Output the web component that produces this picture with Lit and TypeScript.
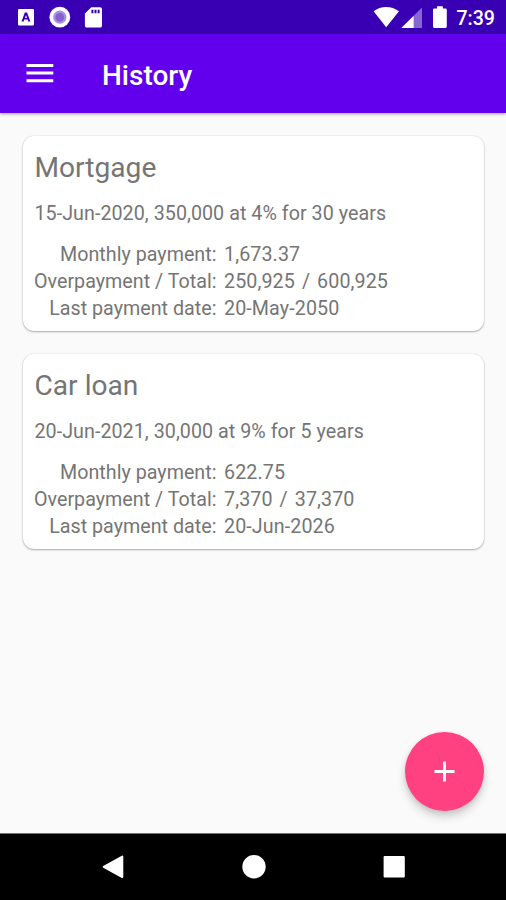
import { LitElement, html, css } from "lit";
import { customElement, property } from "lit/decorators.js";

interface Loan {
  name: string;
  terms: string;
  rows: [string, string][];
}

const LOANS: Loan[] = [
  {
    name: "Mortgage",
    terms: "15-Jun-2020, 350,000 at 4% for 30 years",
    rows: [
      ["Monthly payment:", "1,673.37"],
      ["Overpayment / Total:", "250,925 / 600,925"],
      ["Last payment date:", "20-May-2050"],
    ],
  },
  {
    name: "Car loan",
    terms: "20-Jun-2021, 30,000 at 9% for 5 years",
    rows: [
      ["Monthly payment:", "622.75"],
      ["Overpayment / Total:", "7,370 / 37,370"],
      ["Last payment date:", "20-Jun-2026"],
    ],
  },
];

@customElement("status-bar")
class StatusBar extends LitElement {
  static styles = css`
    :host {
      display: flex;
      align-items: center;
      justify-content: space-between;
      height: 34px;
      padding: 0 11px 0 17px;
      background: #3900b3;
      color: #fff;
    }
    .group {
      display: flex;
      align-items: center;
    }
    svg {
      display: block;
      fill: #fff;
    }
    .time {
      font-size: 19.6px;
      font-weight: 500;
      line-height: 34px;
      padding-top: 2px;
      height: 32px;
      margin-left: 8px;
    }
  `;
  render() {
    return html`
      <div class="group">
        <svg width="87" height="34" viewBox="17 0 87 34">
          <path
            fill-rule="evenodd"
            d="M19.3 9h13.4q1.3 0 1.3 1.3v14q0 1.3-1.3 1.3h-13.4q-1.3 0-1.3-1.3v-14q0-1.3 1.3-1.3zM24.8 12.6l-3.3 8.8h2.2l.6-1.8h3.3l.6 1.8h2.2l-3.3-8.8zM26 15.1l1 2.9h-2z"
          />
          <circle cx="59.8" cy="17.2" r="10.4" />
          <circle cx="59.8" cy="17.2" r="6.6" fill="#a98fdd" />
          <circle cx="59.8" cy="17.2" r="4.3" fill="#8461cf" />
          <path
            fill-rule="evenodd"
            d="M91.3 7.2h8.8q1.9 0 1.9 1.9v16.6q0 1.9-1.9 1.9h-13.3q-1.9 0-1.9-1.9V13.4zM91.4 9.7v3.6h2V9.7zM94.5 9.7v3.6h2V9.7zM97.6 9.7v3.6h2V9.7z"
          />
        </svg>
      </div>
      <div class="group">
        <svg width="75" height="34" viewBox="373 0 75 34">
          <path d="M386.2 27.3L373.6 11.3Q379.2 7 386.2 7T399 11.3z" />
          <path d="M422 7.5V28H401.3z" opacity=".4" />
          <path d="M413.6 15.9V28H401.3z" />
          <path
            d="M437 6.3h5.8v2.2h2.6q1.4 0 1.4 1.4v16.7q0 1.4-1.4 1.4h-11q-1.4 0-1.4-1.4V9.9q0-1.4 1.4-1.4h2.6z"
          />
        </svg>
        <span class="time">7:39</span>
      </div>
    `;
  }
}

@customElement("app-bar")
class AppBar extends LitElement {
  @property() heading = "";
  static styles = css`
    :host {
      display: flex;
      align-items: center;
      height: 78.5px;
      padding-left: 26px;
      background: #6200ee;
      color: #fff;
      box-shadow: 0 1px 3px rgba(0, 0, 0, 0.38);
      z-index: 1;
    }
    svg {
      display: block;
      fill: #fff;
    }
    h1 {
      margin: 0 0 0 48px;
      font-size: 28px;
      font-weight: 500;
      line-height: 34px;
      padding-top: 5px;
    }
  `;
  render() {
    return html`
      <svg width="28" height="20" viewBox="0 0 28 20">
        <path d="M.5 1h26.8v3H.5zM.5 8.6h26.8v3H.5zM.5 16.2h26.8v3H.5z" />
      </svg>
      <h1>${this.heading}</h1>
    `;
  }
}

@customElement("loan-card")
class LoanCard extends LitElement {
  @property({ attribute: false }) loan!: Loan;
  static styles = css`
    :host {
      display: block;
      box-sizing: border-box;
      height: 195px;
      padding: 15px 11.5px 0;
      background: #fff;
      border-radius: 11px;
      box-shadow:
        0 1px 2px rgba(0, 0, 0, 0.3),
        0 0 1.5px rgba(0, 0, 0, 0.14);
      color: #757575;
      font-size: 19.68px;
      line-height: 27px;
      letter-spacing: 0.05px;
      white-space: nowrap;
    }
    h2 {
      margin: 0 0 16px;
      font-size: 28.1px;
      font-weight: 400;
      line-height: 33px;
      letter-spacing: 0.02px;
    }
    .terms {
      margin-bottom: 14px;
    }
    .facts {
      display: grid;
      grid-template-columns: 182px auto;
      column-gap: 7.5px;
      justify-content: start;
    }
    .label {
      justify-self: end;
      letter-spacing: 0.02px;
    }
    .value {
      letter-spacing: 0.1px;
      word-spacing: 2px;
    }
  `;
  render() {
    return html`
      <h2>${this.loan.name}</h2>
      <div class="terms">${this.loan.terms}</div>
      <div class="facts">
        ${this.loan.rows.map(
          ([label, value]) => html`
            <span class="label">${label}</span>
            <span class="value">${value}</span>
          `,
        )}
      </div>
    `;
  }
}

@customElement("nav-bar")
class NavBar extends LitElement {
  static styles = css`
    :host {
      display: flex;
      align-items: center;
      justify-content: space-between;
      box-sizing: border-box;
      height: 67px;
      padding: 0 100px 0 101px;
      border-top: 1px solid #707070;
      background: #000;
    }
    svg {
      display: block;
      fill: #fff;
      stroke: #fff;
      stroke-width: 2;
      stroke-linejoin: round;
    }
  `;
  render() {
    return html`
      <svg width="24" height="24"><path d="M2.7 11.8L21.3 1.6V22z" /></svg>
      <svg width="24" height="24"><circle cx="12" cy="11.7" r="10.7" /></svg>
      <svg width="24" height="24"><rect x="2.6" y="2.1" width="19.2" height="19.4" /></svg>
    `;
  }
}

@customElement("app-root")
class AppRoot extends LitElement {
  static styles = css`
    :host {
      display: flex;
      flex-direction: column;
      position: relative;
      height: 900px;
      overflow: hidden;
      background: #fafafa;
      font-family: Roboto, sans-serif;
    }
    .list {
      flex: 1;
      display: flex;
      flex-direction: column;
      gap: 22.8px;
      padding: 23.5px 22px 0 23px;
    }
    .fab {
      position: absolute;
      right: 22px;
      bottom: 89.5px;
      display: grid;
      place-items: center;
      width: 79px;
      height: 79px;
      padding: 0;
      border: 0;
      border-radius: 50%;
      background: #ff4081;
      box-shadow:
        0 6px 10px rgba(0, 0, 0, 0.16),
        0 2px 5px rgba(0, 0, 0, 0.1);
    }
    .fab svg {
      display: block;
      fill: #fff;
    }
  `;
  render() {
    return html`
      <status-bar></status-bar>
      <app-bar heading="History"></app-bar>
      <main class="list">
        ${LOANS.map((loan) => html`<loan-card .loan=${loan}></loan-card>`)}
      </main>
      <nav-bar></nav-bar>
      <button class="fab" aria-label="Add">
        <svg width="21" height="21"><path d="M9.1.5h2.8v8.6h8.6v2.8h-8.6v8.6H9.1v-8.6H.5V9.1h8.6z" /></svg>
      </button>
    `;
  }
}
